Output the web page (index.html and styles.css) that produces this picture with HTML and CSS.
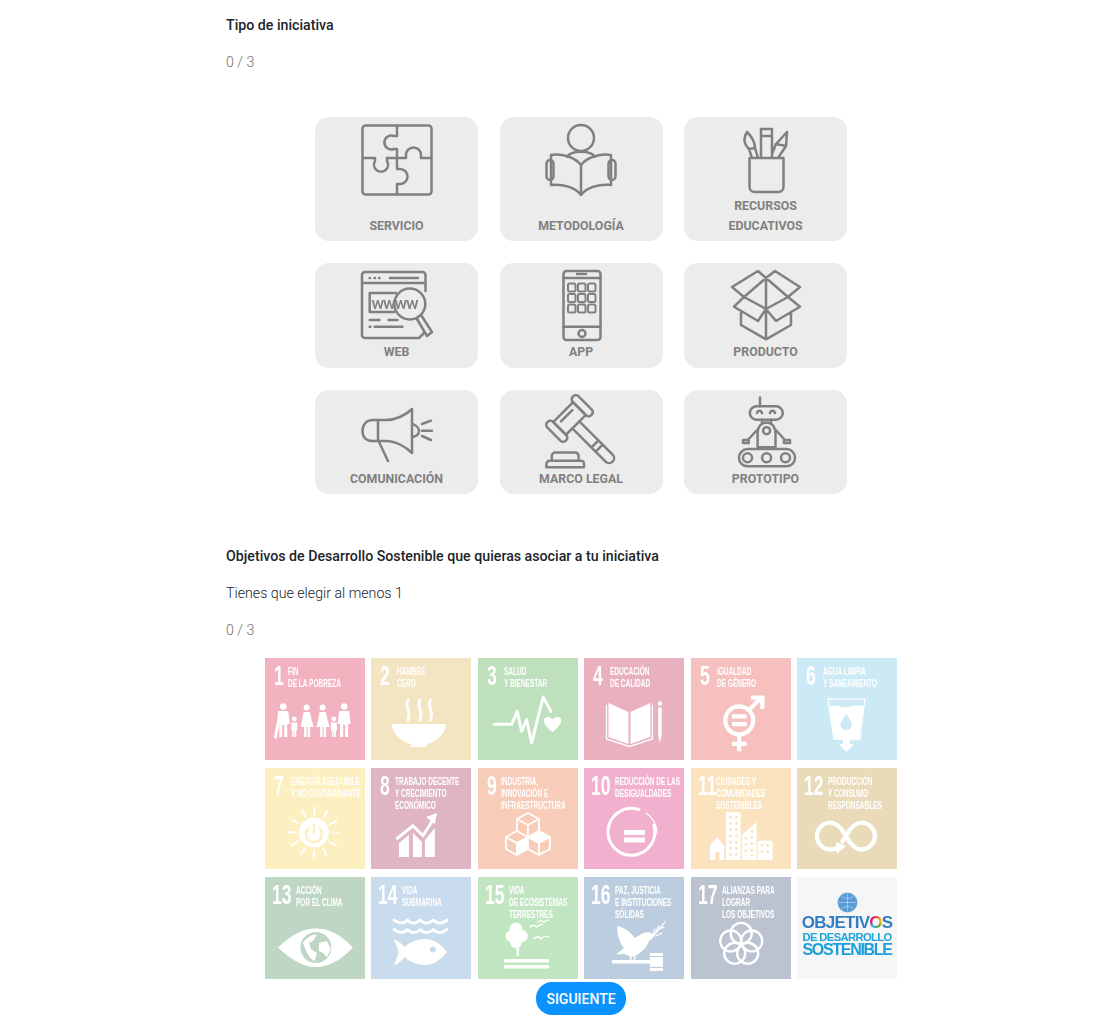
FILE: index.html
```html
<!DOCTYPE html>
<html lang="es">
<head>
<meta charset="utf-8">
<title>Iniciativa</title>
<link rel="stylesheet" href="styles.css">
</head>
<body>
<main class="form">
  <h2 class="title">Tipo de iniciativa</h2>
  <p class="count">0 / 3</p>
  <section class="types">
    <button class="type"><svg class="ic" viewBox="0 0 72 70.5"><rect x="1.5" y="1.5" width="69" height="69" rx="3"/><path d="M36 2V12H33A7 7 0 1 0 33 25H36V34M2 34H14V37A7 7 0 1 0 26 37V34H45V31A7 7 0 1 1 60 31V34H70M36 34V45H39A7 7 0 1 1 39 60H36V70"/></svg><span class="type-label">SERVICIO</span></button>
    <button class="type"><svg class="ic" viewBox="0 0 72 70.5"><circle cx="36" cy="14" r="13"/><path d="M22 33C26 26 46 26 50 33M6 31C16 29 30 33 36 41C42 33 56 29 66 31V61C54 60 42 63 36 71C30 63 18 60 6 61ZM36 41V71"/><rect x="1.5" y="36" width="7" height="20" rx="3.5"/><rect x="63.5" y="36" width="7" height="20" rx="3.5"/></svg><span class="type-label">METODOLOGÍA</span></button>
    <button class="type"><svg class="ic" viewBox="0 0 72 70.5"><path d="M19.5 34H53.500V63A5 5 0 0 1 48.500 68H24.500A5 5 0 0 1 19.500 63ZM31 34V5H42V34M31 12H42M17 8C13 14 14 20 19 25L22 34M17 8C22 13 25 18 25 24L28 34M19 25L25 24M57 8L46 20L42 30M57 8L56 22L48 34M46 20L56 22"/></svg><span class="type-label">RECURSOS<br>EDUCATIVOS</span></button>
    <button class="type"><svg class="ic" viewBox="0 0 72 70.5"><path d="M64.500 21V5A3 3 0 0 0 61.500 2H4A3 3 0 0 0 1 5V65A3 3 0 0 0 4 68H58L63 63M1 13H64.500M29 8H57M8.700 8H9M13.500 8H14M18 8H18.500M35 23H8.700V42H33M8.700 50H18.500M27.500 50H36.500M8.700 56.700H9.500M13.600 56.700H41.500M60 45L71 62L66 66L56 49"/><circle cx="48.800" cy="34" r="15.500"/><text class="www" x="10.500" y="39" textLength="47">wwww</text></svg><span class="type-label">WEB</span></button>
    <button class="type"><svg class="ic" viewBox="0 0 72 70.5"><rect x="18.500" y="1" width="37" height="69" rx="3"/><path d="M18.500 8H55.500M18.500 56.700H55.500M32 4H41"/><circle cx="37" cy="63.500" r="3.500"/><g class="ic-thin"><rect x="23" y="13.500" width="7.500" height="8" rx="1.500"/><rect x="33" y="13.500" width="7.500" height="8" rx="1.500"/><rect x="43" y="13.500" width="7.500" height="8" rx="1.500"/><rect x="23" y="24" width="7.500" height="8" rx="1.500"/><rect x="33" y="24" width="7.500" height="8" rx="1.500"/><rect x="43" y="24" width="7.500" height="8" rx="1.500"/><rect x="23" y="34.500" width="7.500" height="8" rx="1.500"/><rect x="33" y="34.500" width="7.500" height="8" rx="1.500"/><rect x="43" y="34.500" width="7.500" height="8" rx="1.500"/></g></svg><span class="type-label">APP</span></button>
    <button class="type"><svg class="ic" viewBox="0 0 72 70.5"><path d="M36 8L28 1L2 17L14 27L36 39L58 27L70 17L45 1L36 8ZM14 27L36 8L58 27M14 27L4 36.700L28 51L36 39L46 51L70 36.700L58 27M11 43V55L36 69.300L61 55V43M36 8V69.300"/></svg><span class="type-label">PRODUCTO</span></button>
    <button class="type"><svg class="ic" viewBox="0 0 72 70.5"><path d="M51 12C45 18 35 23 25 23H12C5 23 1.500 28 1.500 34C1.500 40 5 44 12 44H25C35 44 45 50 51 56ZM17 23V44M18 45L27 64M52 27C56 29 58 31 58 34C58 37 56 39 52 40M61 27L70 23.700M61 33.700H71M61 39L70 43"/></svg><span class="type-label">COMUNICACIÓN</span></button>
    <button class="type"><svg class="ic" viewBox="0 0 72 70.5"><g transform="translate(24.500 21.500) rotate(-45)"><rect x="14" y="-13" width="8" height="26" rx="3.500"/><rect x="-22" y="-13" width="8" height="26" rx="3.500"/><rect x="-14" y="-9" width="28" height="18"/><path d="M-8 -4H8M-5 9V56A5 5 0 0 0 5 56V9M-5 36H5M-5 42H5"/></g><path d="M6.800 63.700V59A3.500 3.500 0 0 1 10.300 55.500H30A3.500 3.500 0 0 1 33.600 59V63.700M1.400 70.300V67A3.300 3.300 0 0 1 4.700 63.700H36A3 3 0 0 1 39 67V70.300Z"/></svg><span class="type-label">MARCO LEGAL</span></button>
    <button class="type"><svg class="ic" viewBox="0 0 72 70.5"><path d="M30 0.500V9.300M32 22.700V26M41 22.700V26M27.600 50.300V36C27.600 30 31 25.500 36.600 25.500C42 25.500 45.500 30 45.500 36V50.300ZM29 31L18.700 42M44 31L54 42M27 16C28 13 31 13 32 16M40 16C41 13 44 13 45 16"/><rect x="19.800" y="9.300" width="33" height="13.400" rx="6.700"/><circle cx="36.600" cy="33.700" r="3.500"/><path d="M13 46V43H18.700V46ZM54 46V43H60V46Z"/><rect x="9" y="52" width="56" height="17.300" rx="8.600"/><circle cx="17.500" cy="60.700" r="4.500"/><circle cx="36.600" cy="60.700" r="4.500"/><circle cx="55.500" cy="60.700" r="4.500"/></svg><span class="type-label">PROTOTIPO</span></button>
  </section>

  <h2 class="title title-second">Objetivos de Desarrollo Sostenible que quieras asociar a tu iniciativa</h2>
  <p class="hint">Tienes que elegir al menos 1</p>
  <p class="count">0 / 3</p>

  <section class="goals">
    <div class="goal g1"><div class="goal-head"><span class="goal-num goal-num-narrow">1</span><span class="goal-text">FIN<br>DE LA POBREZA</span></div><svg class="goal-ic" viewBox="0 0 100 59.500"><defs><g id="adult"><circle cy="6.500" r="3.200"/><path d="M-5 11h10l1.500 13h-2.500v13h-3v-12h-2v12h-3v-13h-2.500z"/></g><g id="woman"><circle cy="7.500" r="3"/><path d="M-3 12h6l4 15h-3.500v10h-2.500v-10h-1v10h-2.500v-10h-3.500z"/></g><g id="kid"><circle cy="19" r="2.500"/><path d="M-3 22.500h6v8h-1v6.500h-1.700v-6h-.6v6h-1.700v-6.500h-1z"/></g></defs><use href="#adult" x="18.300"/><use href="#kid" x="29.300"/><use href="#woman" x="41.700"/><use href="#woman" x="57.700"/><use href="#kid" x="69"/><use href="#adult" x="79.300"/><path class="w-line" d="M10.500 37L13 24"/></svg></div>

    <div class="goal g2"><div class="goal-head"><span class="goal-num">2</span><span class="goal-text">HAMBRE<br>CERO</span></div><svg class="goal-ic" viewBox="0 0 100 59.500"><path d="M21 24H75C75 36 62 43 56 44V47H40V44C34 43 21 36 21 24Z"/><path class="w-line" d="M37 0C33 6 41 10 37 20M49 0C45 6 53 10 49 20M59.500 0C55.500 6 63.500 10 59.500 20"/></svg></div>

    <div class="goal g3"><div class="goal-head"><span class="goal-num">3</span><span class="goal-text">SALUD<br>Y BIENESTAR</span></div><svg class="goal-ic" viewBox="0 0 100 59.500"><path class="w-line" d="M16 24.300H33.700L39.300 11.300L43.700 31.300L48.700 19.700L53.700 43L65.300 -3L73 11.300"/><path d="M74.700 32C68 27 66 23 66 20.500C66 17 71 15 74.700 19.500C78 15 83.500 17 83.500 20.500C83.500 23 81 27 74.700 32Z"/></svg></div>

    <div class="goal g4"><div class="goal-head"><span class="goal-num">4</span><span class="goal-text">EDUCACIÓN<br>DE CALIDAD</span></div><svg class="goal-ic" viewBox="0 0 100 59.500"><path d="M24.500 3L44.500 12V44L24.500 37ZM66.500 3L46.500 12V44L66.500 37Z"/><path class="w-thin" d="M22.500 5V39L45.500 46.500L68.500 39V5"/><circle cx="76" cy="3.500" r="2.200"/><path d="M74.300 7.500H77.800V35L76 43L74.300 35Z"/></svg></div>

    <div class="goal g5"><div class="goal-head"><span class="goal-num">5</span><span class="goal-text">IGUALDAD<br>DE GÉNERO</span></div><svg class="goal-ic" viewBox="0 0 100 59.500"><circle class="w-line w-bold" cx="48.300" cy="20.300" r="14"/><path d="M41 14.300H55.700V18.600H41ZM41 22H55.700V26.300H41Z"/><path class="w-line w-bold w-butt" d="M48.300 34V51.300M41 44H55.700M58 10L70 -2M60 -2.500H71.500V9"/></svg></div>

    <div class="goal g6"><div class="goal-head"><span class="goal-num">6</span><span class="goal-text">AGUA LIMPIA<br>Y SANEAMIENTO</span></div><svg class="goal-ic" viewBox="0 0 100 59.500"><path class="w-thin" d="M31 -1H68L63 39H37Z"/><path d="M32.500 6C40 4 45 8 50 7C56 6 60 4 66.500 6L62.500 39H37.500Z"/><path class="drop" d="M49.300 14C45 20 43.500 23 43.500 25A5.800 5.800 0 0 0 55 25C55 23 53.500 20 49.300 14Z"/><path d="M46 39H53V44H57L49.500 52L42 44H46Z"/></svg></div>

    <div class="goal g7"><div class="goal-head"><span class="goal-num">7</span><span class="goal-text">ENERGÍA ASEQUIBLE<br>Y NO CONTAMINANTE</span></div><svg class="goal-ic" viewBox="0 0 100 59.500"><circle class="rays" cx="49" cy="22.700" r="21.500"/><circle cx="49" cy="22.700" r="15"/><path class="power" d="M43.500 18.500A8 8 0 1 0 54.500 18.500M49 14.500V23"/></svg></div>

    <div class="goal g8"><div class="goal-head"><span class="goal-num goal-num-mid">8</span><span class="goal-text">TRABAJO DECENTE<br>Y CRECIMIENTO<br>ECONÓMICO</span></div><svg class="goal-ic" viewBox="0 0 100 59.500"><path d="M28 33L38 25V47H28ZM42 23L51 32V47H42ZM54 30L64 18V47H54Z"/><path class="w-line w-butt" d="M25.500 29L42 15.700L52 25.700L62 10"/><path d="M66 3L55 7L64 14Z"/></svg></div>

    <div class="goal g9"><div class="goal-head"><span class="goal-num goal-num-mid">9</span><span class="goal-text">INDUSTRIA,<br>INNOVACIÓN E<br>INFRAESTRUCTURA</span></div><svg class="goal-ic" viewBox="0 0 100 59.500"><path class="w-thin w-med" d="M50 3L61 9V21L50 27L39 21V9ZM39 9L50 15L61 9M50 15V27M39 21L28 27V39L39 45L50 39V27M28 27L39 33L50 27M39 33V45M50 39L61 45L72 39V27L61 21M61 33L72 27M50 27L61 33V45"/><path d="M50 27L61 21L72 27L61 33ZM39 33L50 27V39L39 45Z"/></svg></div>

    <div class="goal g10"><div class="goal-head goal-head-wide"><span class="goal-num">10</span><span class="goal-text">REDUCCIÓN DE LAS<br>DESIGUALDADES</span></div><svg class="goal-ic" viewBox="0 0 100 59.500"><path class="w-line" d="M55 -0.500A23.500 23.500 0 1 0 70 15"/><path class="w-thin" d="M62 3A24 24 0 0 1 73 23"/><path d="M40 20H61V25H40ZM40 27.500H61V32.500H40Z"/></svg></div>

    <div class="goal g11"><div class="goal-head goal-head-wide"><span class="goal-num goal-num-mid">11</span><span class="goal-text">CIUDADES Y<br>COMUNIDADES<br>SOSTENIBLES</span></div><svg class="goal-ic" viewBox="0 0 100 59.500"><path d="M19 36L26 27.300L33.300 36V50H19ZM35 2.300H49.700V50H35ZM51 50V25L65.700 12.300V50ZM66.700 30.700H81.700V50H66.700Z"/><path class="win" d="M39.500 6V46M45.500 6V46M55 27V46M61 20V46M71 34V46M77 34V46"/><path class="door" d="M24 50V42H28.500V50"/></svg></div>

    <div class="goal g12"><div class="goal-head goal-head-wide"><span class="goal-num">12</span><span class="goal-text">PRODUCCIÓN<br>Y CONSUMO<br>RESPONSABLES</span></div><svg class="goal-ic" viewBox="0 0 100 59.500"><path class="w-line w-bold" d="M49 26C43 15 38 12.500 33.500 12.500A13.500 13.500 0 0 0 33.500 39.500C36 39.500 38.500 39 41 38M49 26C55 15 60 12.500 64.500 12.500A13.500 13.500 0 0 1 64.500 39.500C60 39.500 55 37 49 26L45.500 31.500"/><path d="M39 32L49 36L40 44Z"/></svg></div>

    <div class="goal g13"><div class="goal-head goal-head-wide"><span class="goal-num">13</span><span class="goal-text">ACCIÓN<br>POR EL CLIMA</span></div><svg class="goal-ic" viewBox="0 0 100 59.500"><path d="M13 28.500C28 15 38 9.500 51 9.500C64 9.500 75 15 88 28.500C75 42 64 48 51 48C38 48 28 42 13 28.500Z"/><circle class="earth" cx="51" cy="28.500" r="15.500"/><path d="M38 24C42 18 48 15 52 16L48 22L44 24L46 30L52 34L50 42C44 40 42 34 38 24ZM54 24L62 22L66 30L62 38L58 34L54 32Z"/></svg></div>

    <div class="goal g14"><div class="goal-head goal-head-wide"><span class="goal-num">14</span><span class="goal-text">VIDA<br>SUBMARINA</span></div><svg class="goal-ic" viewBox="0 0 100 59.500"><path class="w-line w-wave" d="M23 1C29 5 33 5 36.500 1C40 5 45 5 49.500 1C53 5 58 5 62.500 1C66 5 71 5 76 1M23 10.500C29 14.500 33 14.500 36.500 10.500C40 14.500 45 14.500 49.500 10.500C53 14.500 58 14.500 62.500 10.500C66 14.500 71 14.500 76 10.500"/><path d="M23 20.500C28 22 31 25 33.500 28C40 22 48 20 54 20C63 20 71 26 76 33C71 40 63 46 54 46C48 46 40 44 33.500 38C31 41 28 45 23 46C25.500 40 26 38 28 33C26 28 25.500 26 23 20.500Z"/><circle class="fish-eye" cx="62" cy="30.500" r="3"/></svg></div>

    <div class="goal g15"><div class="goal-head goal-head-wide"><span class="goal-num">15</span><span class="goal-text">VIDA<br>DE ECOSISTEMAS<br>TERRESTRES</span></div><svg class="goal-ic" viewBox="0 0 100 59.500"><circle cx="38" cy="10" r="6.500"/><circle cx="33" cy="17" r="5.500"/><circle cx="44" cy="17" r="6"/><circle cx="38" cy="23" r="6"/><path d="M38.500 26H41V37H38.500ZM26 40H71V43.500H26ZM26 46H71V49.500H26Z"/><path class="w-thin" d="M52 8C55 5 57 6 59 8C61 6 63 5 65 5M60 3C62 1 64 1 66 3C68 1 69 1 71 1M56 20C59 17 61 17 63 20C65 17 68 17 71 18"/></svg></div>

    <div class="goal g16"><div class="goal-head goal-head-wide"><span class="goal-num">16</span><span class="goal-text">PAZ, JUSTICIA<br>E INSTITUCIONES<br>SÓLIDAS</span></div><svg class="goal-ic" viewBox="0 0 100 59.500"><path d="M33.300 7C39 8 46 12 51 19C56 16 60 13 65 13L71 16L66 20C63 30 54 37 47 38L41 35L32 35.500L40 29C35 23 33 14 33.300 7Z"/><path d="M46 38H47.500V43H46ZM50 37H51.500V43H50ZM28 41H66V44.500H28ZM66 34H79V52H66Z"/><path class="gavel-band" d="M66 37.500H79M66 48.500H79"/><path class="w-thin" d="M66 21L81 3M69 16L71 10M72 13L75 7M75 10L80 8M72 17L78 14"/></svg></div>

    <div class="goal g17"><div class="goal-head goal-head-wide"><span class="goal-num">17</span><span class="goal-text">ALIANZAS PARA<br>LOGRAR<br>LOS OBJETIVOS</span></div><svg class="goal-ic" viewBox="0 0 100 59.500"><g class="rings"><circle cx="50.300" cy="14.300" r="10.500"/><circle cx="60.800" cy="21.900" r="10.500"/><circle cx="56.800" cy="34.200" r="10.500"/><circle cx="43.800" cy="34.200" r="10.500"/><circle cx="39.800" cy="21.900" r="10.500"/></g></svg></div>

    <div class="goal g18"><svg class="un" viewBox="0 0 24 24"><circle cx="12" cy="12" r="11.500"/><path d="M12 2V22M2 12H22M5 5C9 8 15 8 19 5M5 19C9 16 15 16 19 19"/></svg><span class="un-a">OBJETIV<span class="un-ring">O</span>S</span><span class="un-b">DE DESARROLLO</span><span class="un-c">SOSTENIBLE</span></div>
  </section>

  <div class="actions"><button class="next">SIGUIENTE</button></div>
</main>
</body>
</html>
```

FILE: styles.css
```css
* { box-sizing: border-box; }
html, body { margin: 0; background: #fff; }
body { font-family: Roboto, "Liberation Sans", sans-serif; }

.form { width: 710px; margin-left: 226px; padding-top: 14px; }

.title { margin: 0; font-size: 14.2px; font-weight: 500; line-height: 22px; color: #212529; }
.title-second { margin-top: 50.5px; }
.count { margin: 15px 0 0; font-size: 14.2px; font-weight: 300; line-height: 22px; color: #6f6f6f; }
.hint { margin: 15px 0 0; font-size: 14.2px; font-weight: 300; line-height: 22px; color: #212529; }

/* Initiative types */
.types {
  display: grid;
  grid-template-columns: repeat(3, 163px);
  gap: 22px 21.5px;
  width: 532px;
  margin: 43.5px auto 0;
}
.type {
  display: flex;
  flex-direction: column;
  align-items: center;
  padding: 7px 0 5.5px;
  border: 0;
  border-radius: 14px;
  background: #ececec;
  font-family: inherit;
}
.ic {
  flex: none;
  width: 72px;
  height: 70.5px;
  margin-bottom: 1.5px;
  overflow: visible;
  fill: none;
  stroke: #808080;
  stroke-width: 2.5;
  stroke-linecap: round;
  stroke-linejoin: round;
  filter: blur(.4px);
}
.ic-thin { stroke-width: 2; }
.www { font: 500 17px Roboto, sans-serif; fill: #808080; stroke: none; }
.type-label {
  margin-top: auto;
  font-size: 12.35px;
  font-weight: 700;
  line-height: 20px;
  color: #808080;
  text-align: center;
}

/* Sustainable development goals */
.goals {
  display: grid;
  grid-template-columns: repeat(6, 1fr);
  grid-auto-rows: 101.5px;
  gap: 8px 6.6px;
  width: 632px;
  margin: 17.5px auto 0;
  filter: blur(.35px);
}
.goal {
  display: flex;
  flex-direction: column;
  color: #fff;
}
.goal-head {
  display: flex;
  flex: none;
  height: 42px;
  padding: 7px 0 0 9px;
}
.goal-head-wide { padding-left: 7px; }
.goal-num {
  flex: none;
  width: 17px;
  margin-top: -2px;
  font: 700 27px/27px "Liberation Sans", sans-serif;
  white-space: nowrap;
  transform: scaleX(.65);
  transform-origin: left top;
}
.goal-head-wide .goal-num { width: 24px; }
.goal-num-narrow { width: 13.5px; }
.goal-num-mid { width: 14.5px; }
.goal-head-wide .goal-num-mid { width: 18.5px; }
.goal-text {
  flex: none;
  width: 60px;
  font: 700 10.5px/12px "Liberation Sans", sans-serif;
  white-space: nowrap;
  transform: scaleX(.62);
  transform-origin: left top;
}
.goal-ic { flex: none; width: 100%; height: 59.5px; overflow: visible; fill: #fff; }
.w-line { fill: none; stroke: #fff; stroke-width: 3; stroke-linecap: round; stroke-linejoin: round; }
.w-bold { stroke-width: 4.3; }
.w-butt { stroke-linecap: butt; stroke-linejoin: miter; }
.w-wave { stroke-width: 2.8; }
.w-thin { fill: none; stroke: #fff; stroke-width: 1.3; stroke-linecap: round; }
.w-med { stroke-width: 1.8; }
.rays { fill: none; stroke: #fff; stroke-width: 9; stroke-dasharray: 2 9.259; stroke-dashoffset: 1; }
.rings { fill: none; stroke: #fff; stroke-width: 2.4; }

.g1 { background: #f3b2c0; }
.g2 { background: #f3e4c2; }
.g3 { background: #bee0bd; }
.g4 { background: #e9b1c0; }
.g5 { background: #f6c0be; }
.g6 { background: #cbeaf6; }
.g7 { background: #fcefc0; }
.g8 { background: #dfb4c4; }
.g9 { background: #f7cdb9; }
.g10 { background: #f1b0cd; }
.g11 { background: #fae3be; }
.g12 { background: #e9dab9; }
.g13 { background: #c0d6c4; }
.g14 { background: #c8dcee; }
.g15 { background: #c1e5c1; }
.g16 { background: #bbcdde; }
.g17 { background: #bcc3d0; }
.drop { fill: #cbeaf6; }
.power { fill: none; stroke: #fcefc0; stroke-width: 2.4; stroke-linecap: round; }
.win { fill: none; stroke: #fae3be; stroke-width: 2.6; stroke-dasharray: 2.6 3.6; }
.door { fill: #fae3be; }
.earth { fill: #c0d6c4; }
.fish-eye { fill: #c8dcee; }
.gavel-band { fill: none; stroke: #bbcdde; stroke-width: 1; }

.g18 {
  align-items: center;
  padding-top: 14.5px;
  background: #f6f6f6;
  font-family: "Liberation Sans", sans-serif;
  font-weight: 700;
}
.un { flex: none; width: 21px; height: 21px; fill: #5b9bd5; stroke: #dbe8f4; stroke-width: .6; }
.un-a { margin-top: 3.5px; font-size: 17px; line-height: 14px; letter-spacing: -.73px; color: #2f7fc8; }
.un-b { margin-top: .5px; font-size: 11.2px; line-height: 13px; letter-spacing: -.6px; color: #1ba3dc; }
.un-c { margin-top: -.5px; font-size: 16px; line-height: 13px; letter-spacing: -1.3px; color: #1a9fdc; }
.un-ring { background: conic-gradient(#e5243b, #fcc30b, #4c9f38, #26bde2, #dd1367, #e5243b); -webkit-background-clip: text; background-clip: text; color: transparent; }

.actions { display: flex; justify-content: center; margin-top: 3.5px; }
.next {
  width: 90px;
  height: 33px;
  padding: 0;
  border: 0;
  border-radius: 16px;
  background: #0a93ff;
  color: #fff;
  font: 500 14px Roboto, sans-serif;
}
```
